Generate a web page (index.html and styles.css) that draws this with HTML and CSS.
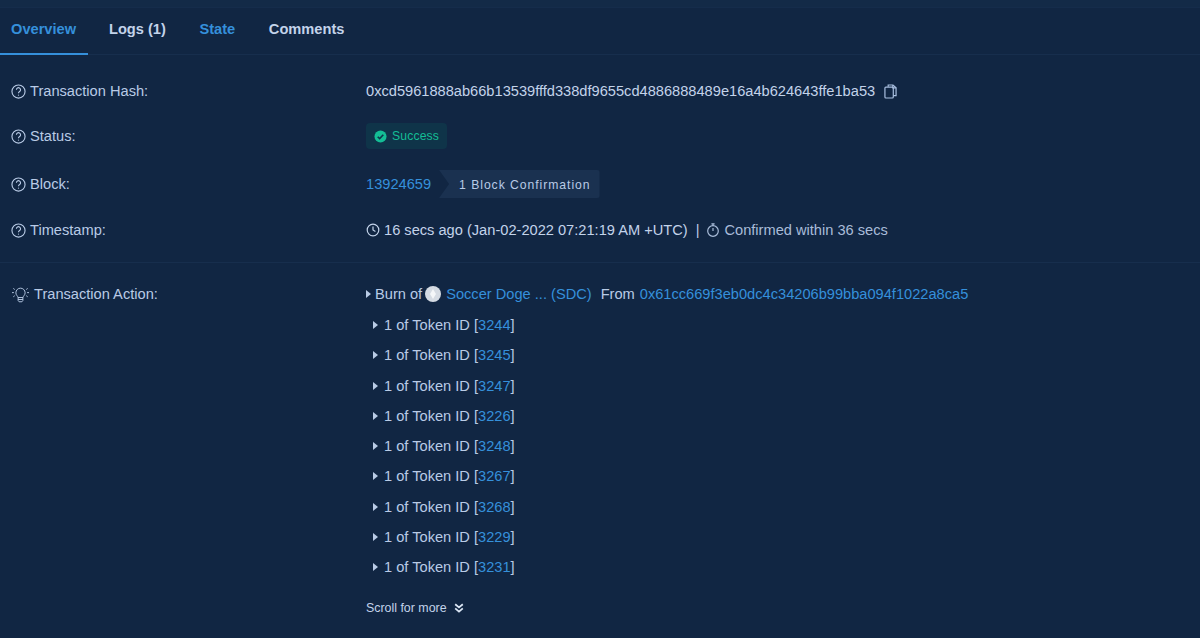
FILE: index.html
```html
<!DOCTYPE html>
<html lang="en">
<head>
<meta charset="utf-8">
<title>Transaction Details</title>
<link rel="stylesheet" href="styles.css">
</head>
<body>
<div class="page">
  <nav class="tabs">
    <a class="tab tab-active">Overview</a>
    <a class="tab">Logs (1)</a>
    <a class="tab tab-blue">State</a>
    <a class="tab">Comments</a>
  </nav>
  <main class="details">
    <div class="row row-hash">
      <div class="label"><svg class="qicon" viewBox="0 0 16 16"><circle cx="8" cy="8" r="7"/><path d="M5.8 6.2a2.2 2.2 0 1 1 3.4 1.8c-.8.5-1.2 1-1.2 1.9"/><path d="M8 11.4v1"/></svg>Transaction Hash:</div>
      <div class="value">0xcd5961888ab66b13539fffd338df9655cd4886888489e16a4b624643ffe1ba53
        <svg class="copy" viewBox="0 0 14 16"><path d="M4.5 3V1h5.2L13 4v8.5H10"/><path d="M9.5 1v3.2H13"/><rect x="1" y="3.2" width="9" height="11.8" rx="1"/></svg>
      </div>
    </div>
    <div class="row row-status">
      <div class="label"><svg class="qicon" viewBox="0 0 16 16"><circle cx="8" cy="8" r="7"/><path d="M5.8 6.2a2.2 2.2 0 1 1 3.4 1.8c-.8.5-1.2 1-1.2 1.9"/><path d="M8 11.4v1"/></svg>Status:</div>
      <div class="value"><span class="badge"><svg class="check" viewBox="0 0 14 14"><circle cx="7" cy="7" r="6.5"/><path d="M4 7.2l2.1 2.1L10 5.2"/></svg>Success</span></div>
    </div>
    <div class="row row-block">
      <div class="label"><svg class="qicon" viewBox="0 0 16 16"><circle cx="8" cy="8" r="7"/><path d="M5.8 6.2a2.2 2.2 0 1 1 3.4 1.8c-.8.5-1.2 1-1.2 1.9"/><path d="M8 11.4v1"/></svg>Block:</div>
      <div class="value"><a class="link">13924659</a><span class="confirm">1 Block Confirmation</span></div>
    </div>
    <div class="row row-time">
      <div class="label"><svg class="qicon" viewBox="0 0 16 16"><circle cx="8" cy="8" r="7"/><path d="M5.8 6.2a2.2 2.2 0 1 1 3.4 1.8c-.8.5-1.2 1-1.2 1.9"/><path d="M8 11.4v1"/></svg>Timestamp:</div>
      <div class="value">
        <svg class="clock" viewBox="0 0 14 14"><circle cx="7" cy="7" r="5.8"/><path d="M7 3.6V7l2.4 1.4"/></svg>16 secs ago (Jan-02-2022 07:21:19 AM +UTC)<span class="sep">|</span><span class="muted"><svg class="clock" viewBox="0 0 14 14"><circle cx="7" cy="8" r="5.3"/><path d="M7 .9v1.8M5.4.9h3.2M7 5v3"/></svg>Confirmed within 36 secs</span>
      </div>
    </div>
    <hr class="rule">
    <div class="row row-action">
      <div class="label"><svg class="bulb" viewBox="0 0 20 18"><path d="M7.3 12.2c0-1.6-2.2-2.4-2.2-5a4.9 4.9 0 0 1 9.8 0c0 2.6-2.2 3.4-2.2 5z"/><path d="M7.5 12.2v3.2l1 1.3h3l1-1.3v-3.2M7.5 14.3h5"/><path d="M1 7h2M17 7h2M2.4 2.6l1.5 1.1M17.6 2.6l-1.5 1.1M2.4 11.4l1.5-1.1M17.6 11.4l-1.5-1.1"/></svg>Transaction Action:</div>
      <div class="value actions">
        <div class="list">
          <div class="item item-top"><span class="caret"></span>Burn of<span class="coin"><svg viewBox="0 0 14 14"><path d="M7 2.6L4.4 7 7 11.4 9.6 7z"/></svg></span><a class="link">Soccer Doge ... (SDC)</a><span class="from">From</span><a class="link addr">0x61cc669f3eb0dc4c34206b99bba094f1022a8ca5</a></div>
          <div class="item"><span class="caret"></span>1 of Token ID <span class="brk">[<a class="link">3244</a>]</span></div>
          <div class="item"><span class="caret"></span>1 of Token ID <span class="brk">[<a class="link">3245</a>]</span></div>
          <div class="item"><span class="caret"></span>1 of Token ID <span class="brk">[<a class="link">3247</a>]</span></div>
          <div class="item"><span class="caret"></span>1 of Token ID <span class="brk">[<a class="link">3226</a>]</span></div>
          <div class="item"><span class="caret"></span>1 of Token ID <span class="brk">[<a class="link">3248</a>]</span></div>
          <div class="item"><span class="caret"></span>1 of Token ID <span class="brk">[<a class="link">3267</a>]</span></div>
          <div class="item"><span class="caret"></span>1 of Token ID <span class="brk">[<a class="link">3268</a>]</span></div>
          <div class="item"><span class="caret"></span>1 of Token ID <span class="brk">[<a class="link">3229</a>]</span></div>
          <div class="item"><span class="caret"></span>1 of Token ID <span class="brk">[<a class="link">3231</a>]</span></div>
        </div>
        <div class="more">Scroll for more<svg class="chev" viewBox="0 0 10 10"><path d="M1.2 1.2L5 4.4l3.8-3.2M1.2 5.4L5 8.6l3.8-3.2"/></svg></div>
      </div>
    </div>
  </main>
</div>
</body>
</html>
```

FILE: styles.css
```css
* { box-sizing: border-box; }
html, body { margin: 0; height: 100%; }
body {
  background: #132a47;
  font-family: "Liberation Sans", Arial, sans-serif;
  font-size: 14.63px;
  color: #b9cbe6;
  overflow: hidden;
}
.page {
  margin-top: 7px;
  height: 631px;
  background: #112643;
  overflow: hidden;
  border-top: 1px solid #152c4b;
}
.tabs {
  display: flex;
  height: 47px;
  border-bottom: 1px solid #172e4d;
}
.tab {
  display: flex;
  align-items: center;
  padding: 0 11px 4px;
  margin-right: 11.6px;
  height: 46px;
  font-weight: 700;
  color: #c3d3ea;
}
.tab-active {
  color: #3590db;
  width: 88px;
  height: 47px;
  border-bottom: 2px solid #3590db;
  padding-bottom: 3px;
  margin-right: 10px;
}
.tab-blue { color: #3590db; }
.details { padding: 0 0 0 11px; }
.row { display: flex; align-items: center; }
.label {
  flex: 0 0 355px;
  display: flex;
  align-items: center;
  height: 20px;
}
.value {
  flex: 1;
  display: flex;
  align-items: center;
  min-height: 20px;
  color: #c3d3ea;
}
.row-hash { margin-top: 26px; }
.row-status { margin-top: 22px; }
.row-block { margin-top: 21px; }
.row-time { margin-top: 22px; }
.qicon {
  width: 15px;
  height: 15px;
  margin-right: 4px;
  fill: none;
  stroke: #b9cbe6;
  stroke-width: 1.2;
}
.copy {
  width: 13px;
  height: 15px;
  margin-left: 9px;
  fill: none;
  stroke: #a9bfe0;
  stroke-width: 1.3;
}
.badge {
  display: inline-flex;
  align-items: center;
  height: 26px;
  padding: 0 8px;
  border-radius: 4px;
  background: #0f3449;
  color: #14bd95;
  font-size: 12.2px;
  letter-spacing: 0.15px;
}
.check {
  width: 13px;
  height: 13px;
  margin-right: 5px;
}
.check circle { fill: #14bd95; }
.check path { fill: none; stroke: #0f3449; stroke-width: 1.7; }
.link { color: #3590db; }
.confirm {
  display: inline-flex;
  align-items: center;
  height: 28px;
  margin-left: 8px;
  padding: 1px 9px 0 20px;
  font-size: 12.2px;
  letter-spacing: 0.95px;
  color: #b9cbe6;
  background: #1a3150;
  border-radius: 0 3px 3px 0;
  clip-path: polygon(0 0, 100% 0, 100% 100%, 0 100%, 10px 50%);
}
.clock {
  width: 14px;
  height: 14px;
  margin-right: 4px;
  fill: none;
  stroke: #c3d3ea;
  stroke-width: 1.2;
  flex: none;
}
.sep { margin: 0 7px 0 8px; color: #b9cbe6; }
.muted { display: inline-flex; align-items: center; color: #a9bcd9; }
.muted .clock { stroke: #a9bcd9; }
.rule {
  margin: 22px 0 0 -11px;
  border: 0;
  border-top: 1px solid #172e4d;
}
.row-action { margin-top: 21px; align-items: flex-start; }
.bulb {
  width: 19px;
  height: 17px;
  margin-right: 4px;
  fill: none;
  stroke: #b9cbe6;
  stroke-width: 1;
  flex: none;
}
.actions { display: block; }
.list {
  height: 296px;
  overflow: hidden;
}
.item {
  display: flex;
  align-items: center;
  height: 20px;
  margin-top: 10.25px;
  padding-left: 7px;
  white-space: pre;
  color: #b9cbe6;
}
.item-top { margin-top: 0; margin-bottom: 11px; padding-left: 0; }
.caret {
  width: 0;
  height: 0;
  margin-right: 6px;
  border-left: 5px solid #b9cbe6;
  border-top: 4px solid transparent;
  border-bottom: 4px solid transparent;
}
.item-top .caret { margin-right: 4px; }
.item-top .from { margin: 0 5px 0 9px; }
.coin {
  display: inline-flex;
  width: 16px;
  height: 16px;
  margin: 0 5px 0 3px;
  border-radius: 50%;
  background: #d5dbe3;
}
.coin svg { width: 16px; height: 16px; fill: #f4f6f8; }
.brk { color: #b9cbe6; }
.more {
  display: flex;
  align-items: center;
  height: 16px;
  margin-top: 20px;
  font-size: 12.4px;
  color: #c3d3ea;
}
.chev {
  width: 10px;
  height: 10px;
  margin-left: 7px;
  fill: none;
  stroke: #dbe6f5;
  stroke-width: 1.8;
}
```
